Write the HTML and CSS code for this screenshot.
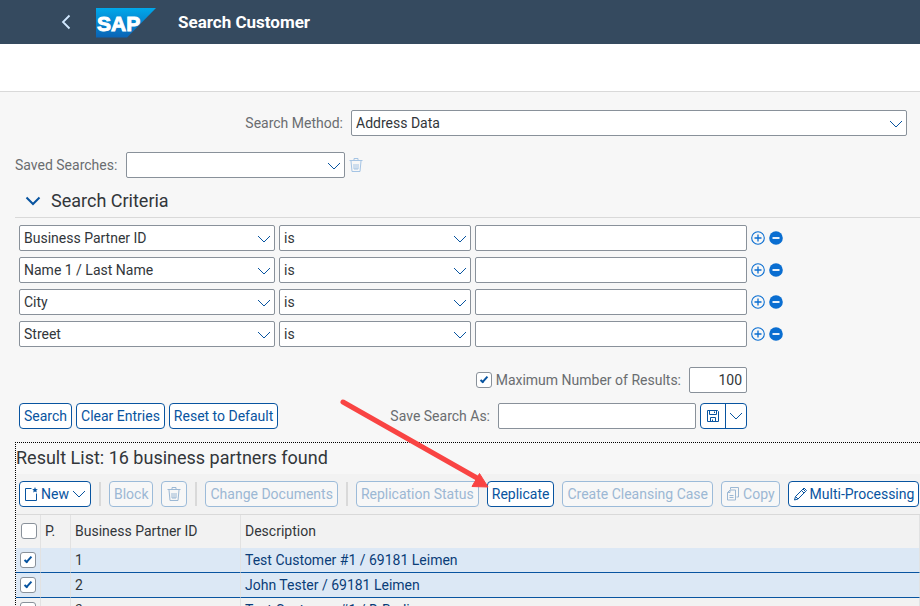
FILE: index.html
```html
<!DOCTYPE html>
<html lang="en">
<head>
<meta charset="utf-8">
<title>Search Customer</title>
<link rel="stylesheet" href="styles.css">
</head>
<body>
<svg class="defs" aria-hidden="true">
  <symbol id="chevron" viewBox="0 0 14 8"><path d="M1 1l6 6 6-6" fill="none" stroke="currentColor" stroke-width="1"/></symbol>
  <symbol id="trash" viewBox="0 0 14 16"><path d="M.5 3.5h13M5 3V1.500h4V3M2 4l1 10.500h8L12 4M5 7v5h4V7M7 7v5" fill="none" stroke="currentColor"/></symbol>
  <symbol id="plus" viewBox="0 0 14 14"><circle cx="7" cy="7" r="6.300" fill="none" stroke="currentColor" stroke-width="1.100"/><path d="M3.500 7h7M7 3.500v7" stroke="currentColor" stroke-width="1.300"/></symbol>
  <symbol id="minus" viewBox="0 0 14 14"><circle cx="7" cy="7" r="6.800" fill="currentColor"/><path d="M3.500 7h7" stroke="#fff" stroke-width="1.800"/></symbol>
</svg>

<header class="shell">
  <button class="back" aria-label="Back"><svg width="10" height="16" viewBox="0 0 10 16"><path d="M8.500 1.500L2 8l6.500 6.500" fill="none" stroke="#d1e8ff" stroke-width="1.800"/></svg></button>
  <svg class="logo" width="60" height="30" viewBox="0 0 60 30" role="img" aria-label="SAP">
    <defs><linearGradient id="sap" x1="0" y1="0" x2="0" y2="1"><stop offset="0" stop-color="#00a8ea"/><stop offset="1" stop-color="#0a63b5"/></linearGradient></defs>
    <path d="M0 0h60L31 29.500H0z" fill="url(#sap)"/>
    <text class="logo-text" x="1" y="22.500">SAP</text>
  </svg>
  <h1 class="shell-title">Search Customer</h1>
</header>
<div class="subheader"></div>

<main class="content">
  <div class="method-row">
    <label class="label" for="method">Search Method:</label>
    <div class="select"><select id="method"><option>Address Data</option></select><svg><use href="#chevron"/></svg></div>
  </div>
  <div class="saved-row">
    <label class="label" for="saved">Saved Searches:</label>
    <div class="select"><select id="saved"><option></option></select><svg><use href="#chevron"/></svg></div>
    <button class="icon-button" aria-label="Delete saved search" disabled><svg width="14" height="16"><use href="#trash"/></svg></button>
  </div>

  <section>
    <h2 class="section-title"><button class="toggle" aria-label="Collapse"><svg width="16" height="10" viewBox="0 0 16 10"><path d="M1.500 1.500L8 8l6.500-6.500" fill="none" stroke="currentColor" stroke-width="2"/></svg></button>Search Criteria</h2>
    <div class="criteria">
      <div class="criterion">
        <div class="select"><select aria-label="Field"><option>Business Partner ID</option></select><svg><use href="#chevron"/></svg></div>
        <div class="select"><select aria-label="Operator"><option>is</option></select><svg><use href="#chevron"/></svg></div>
        <input class="input" aria-label="Value">
        <button class="icon-button" aria-label="Add line"><svg width="14" height="14"><use href="#plus"/></svg></button>
        <button class="icon-button" aria-label="Remove line"><svg width="14" height="14"><use href="#minus"/></svg></button>
      </div>
      <div class="criterion">
        <div class="select"><select aria-label="Field"><option>Name 1 / Last Name</option></select><svg><use href="#chevron"/></svg></div>
        <div class="select"><select aria-label="Operator"><option>is</option></select><svg><use href="#chevron"/></svg></div>
        <input class="input" aria-label="Value">
        <button class="icon-button" aria-label="Add line"><svg width="14" height="14"><use href="#plus"/></svg></button>
        <button class="icon-button" aria-label="Remove line"><svg width="14" height="14"><use href="#minus"/></svg></button>
      </div>
      <div class="criterion">
        <div class="select"><select aria-label="Field"><option>City</option></select><svg><use href="#chevron"/></svg></div>
        <div class="select"><select aria-label="Operator"><option>is</option></select><svg><use href="#chevron"/></svg></div>
        <input class="input" aria-label="Value">
        <button class="icon-button" aria-label="Add line"><svg width="14" height="14"><use href="#plus"/></svg></button>
        <button class="icon-button" aria-label="Remove line"><svg width="14" height="14"><use href="#minus"/></svg></button>
      </div>
      <div class="criterion">
        <div class="select"><select aria-label="Field"><option>Street</option></select><svg><use href="#chevron"/></svg></div>
        <div class="select"><select aria-label="Operator"><option>is</option></select><svg><use href="#chevron"/></svg></div>
        <input class="input" aria-label="Value">
        <button class="icon-button" aria-label="Add line"><svg width="14" height="14"><use href="#plus"/></svg></button>
        <button class="icon-button" aria-label="Remove line"><svg width="14" height="14"><use href="#minus"/></svg></button>
      </div>
    </div>
    <div class="max-row">
      <input class="check" type="checkbox" id="max-on" checked>
      <label class="label" for="max-on">Maximum Number of Results:</label>
      <input class="input number" value="100" aria-label="Maximum number of results">
    </div>
    <div class="action-row">
      <button class="button">Search</button>
      <button class="button">Clear Entries</button>
      <button class="button">Reset to Default</button>
      <label class="label save-label" for="save-as">Save Search As:</label>
      <input class="input save-input" id="save-as">
      <div class="split">
        <button class="split-main" aria-label="Save"><svg width="14" height="14" viewBox="0 0 14 14"><path d="M1.500 1.500h10l1 1v10h-11zM3.500 1.500v4h7v-4M4.500 12.500v-4h5v4M6.500 10.500v2M8.500 2.500v1.500" fill="none" stroke="currentColor"/></svg></button>
        <button class="split-arrow" aria-label="More save options"><svg width="14" height="8"><use href="#chevron"/></svg></button>
      </div>
    </div>
  </section>

  <section class="results">
    <h2 class="result-title">Result List: 16 business partners found</h2>
    <div class="toolbar">
      <button class="button"><svg width="14" height="16" viewBox="0 0 14 16"><path d="M7.500 2.500h-6v12h11V7.500" fill="none" stroke="currentColor"/><path d="M11 1l.8 2 2 .2-1.500 1.300.5 2L11 5.400 9.200 6.500l.5-2-1.500-1.300 2-.2z" fill="currentColor"/></svg>New<svg width="14" height="8"><use href="#chevron"/></svg></button>
      <span class="separator"></span>
      <button class="button" disabled>Block</button>
      <button class="button" aria-label="Delete" disabled><svg width="14" height="16"><use href="#trash"/></svg></button>
      <span class="separator"></span>
      <button class="button" disabled>Change Documents</button>
      <span class="separator"></span>
      <button class="button" disabled>Replication Status</button>
      <button class="button">Replicate</button>
      <button class="button" disabled>Create Cleansing Case</button>
      <button class="button" disabled><svg width="14" height="16" viewBox="0 0 14 16"><path d="M4.500 3.500V1.500h8v9.500h-2M4 4h5.500v10h-8V6.500zM4 4v2.500H1.500M3.500 9.500h4M3.500 11.500h4" fill="none" stroke="currentColor"/></svg>Copy</button>
      <button class="button"><svg width="14" height="16" viewBox="0 0 14 16"><path d="M1.500 14l1-3.500L10 3l2.500 2.500L5 13zM8.500 4.500L11 7M10 3l1-1 2.500 2.500-1 1M2.500 10.500L5 13" fill="none" stroke="currentColor"/></svg>Multi-Processing</button>
    </div>
    <table class="table">
      <colgroup><col class="col-check"><col class="col-p"><col class="col-id"><col></colgroup>
      <thead><tr><th><input class="check" type="checkbox" aria-label="Select all"></th><th>P.</th><th>Business Partner ID</th><th>Description</th></tr></thead>
      <tbody>
        <tr class="selected"><td><input class="check" type="checkbox" aria-label="Select 1" checked></td><td></td><td>1</td><td><a href="#">Test Customer #1 / 69181 Leimen</a></td></tr>
        <tr class="selected"><td><input class="check" type="checkbox" aria-label="Select 2" checked></td><td></td><td>2</td><td><a href="#">John Tester / 69181 Leimen</a></td></tr>
        <tr><td><input class="check" type="checkbox" aria-label="Select 3"></td><td></td><td>3</td><td><a href="#">Test Customer #1 / D-Berlin</a></td></tr>
      </tbody>
    </table>
  </section>
</main>
<svg class="pointer" width="150" height="92" viewBox="0 0 150 92" aria-hidden="true"><path d="M4 4L138 80" stroke="#f94443" stroke-width="5" stroke-linecap="round"/><path d="M149 89L133 88.500 140.500 75.500z" fill="#f94443" stroke="#f94443"/></svg>
</body>
</html>
```
FILE: styles.css
```css
* { box-sizing: border-box; }
body {
  position: relative;
  display: flex;
  flex-direction: column;
  height: 100vh;
  margin: 0;
  overflow: hidden;
  background: #f7f7f7;
  color: #32363a;
  font: 14px/18px Roboto, "Liberation Sans", sans-serif;
}
button, input, select { margin: 0; font: inherit; color: inherit; }
button { display: flex; align-items: center; justify-content: center; padding: 0; border: 0; background: none; }
h1, h2 { margin: 0; }
svg { flex: none; }
.defs { display: none; }

.shell { display: flex; flex: none; align-items: center; height: 44px; padding-left: 61px; background: #354a5f; color: #fff; }
.logo { margin: 1px 22px 0 25px; }
.logo-text { fill: #fff; font: bold 21px "Liberation Sans", sans-serif; stroke: #fff; }
.shell-title { font-size: 17px; line-height: 20px; font-weight: 700; }
.subheader { flex: none; height: 48px; background: #fff; border-bottom: 1px solid #d9d9d9; }

.content { flex: none; padding: 18px 0 0 15px; }
.label { color: #6a6d70; white-space: nowrap; }
.method-row { display: flex; align-items: center; gap: 8px; padding-right: 13px; }
.method-row .label { width: 328px; text-align: right; }
.method-row .select { flex: 1; }
.saved-row { display: flex; align-items: center; margin-top: 16px; }
.saved-row .label { width: 111px; }
.saved-row .select { width: 219px; margin-right: 4px; }

.select { display: grid; align-items: center; color: #32363a; }
.select > * { grid-area: 1 / 1; }
.select select { width: 100%; appearance: none; padding: 0 24px 0 4px; }
.select svg { justify-self: end; width: 14px; height: 8px; margin: 1px 4px 0 0; color: #0854a0; pointer-events: none; }
.select select, .input { height: 26px; border: 1px solid #89919a; border-radius: 2px; background: #fff; }
.input { min-width: 0; padding: 0 4px; }
.icon-button { width: 14px; height: 16px; color: #0a6ed1; }
.icon-button:disabled { color: #a5c4e4; }

.section-title { display: flex; align-items: center; gap: 10px; height: 40px; padding: 6px 0 0 10px; border-bottom: 1px solid #d9d9d9; font-size: 18px; font-weight: 400; }
.toggle { width: 16px; color: #0854a0; }
.criteria { display: grid; gap: 6px; padding: 7px 0 0 4px; }
.criterion { display: grid; grid-template-columns: 256px 192px 272px 14px 14px; gap: 4px; align-items: center; }
.max-row, .action-row { display: flex; align-items: center; gap: 4px; width: 732px; padding-left: 4px; }
.max-row { justify-content: flex-end; margin-top: 20px; }
.number { width: 58px; margin-left: 4px; text-align: right; }
.action-row { margin-top: 10px; }
.save-label { margin-left: auto; padding-right: 4px; }
.save-input { width: 198px; }
.split { display: flex; width: 47px; height: 26px; border: 1px solid #0854a0; border-radius: 4px; background: #fff; color: #0854a0; }
.split-main { flex: 1; border-right: 1px solid #0854a0; }
.split-arrow { width: 20px; }

.button { flex: none; gap: 3px; min-width: 26px; height: 26px; padding: 0 4px; border: 1px solid #0854a0; border-radius: 4px; background: #fff; color: #0854a0; white-space: nowrap; }
.button:disabled { border-color: #9cbbd9; background: #f7f7f7; color: #9cb8d4; }
.check { display: grid; place-items: center; flex: none; width: 16px; height: 16px; appearance: none; border: 1px solid #89919a; border-radius: 3px; background: #fff; }
.check:checked::before { content: ""; width: 8px; height: 4px; box-sizing: border-box; margin-top: -2px; border: solid #0854a0; border-width: 0 0 2px 2px; transform: rotate(-48deg); }

.results { margin-top: 13px; border: dotted #000; border-width: 1px 0 0 1px; }
.result-title { height: 31px; line-height: 30px; font-size: 18px; font-weight: 400; }
.toolbar { display: flex; align-items: center; gap: 8px; height: 40px; padding: 0 3px; background: #f2f2f2; }
.separator { flex: none; width: 2px; height: 24px; background: #d9d9d9; }
.table { width: 100%; border-collapse: separate; border-spacing: 0; table-layout: fixed; background: #f2f2f2; border-top: 1px solid #d9d9d9; }
.col-check { width: 25px; }
.col-p { width: 30px; }
.col-id { width: 170px; }
.table th, .table td { padding: 0 4px; border-right: 1px solid #e2e2e2; text-align: left; font-weight: 400; white-space: nowrap; }
.table th:first-child { padding-left: 5px; }
.table th { height: 33px; padding-bottom: 2px; }
.table td { height: 25px; border-bottom: 1px solid #e5e5e5; }
.table a { color: #0a3d78; text-decoration: none; }
.table .selected td { background: #dce8f5; border-bottom-color: #0854a0; }
.pointer { position: absolute; left: 339px; top: 398px; }
```
